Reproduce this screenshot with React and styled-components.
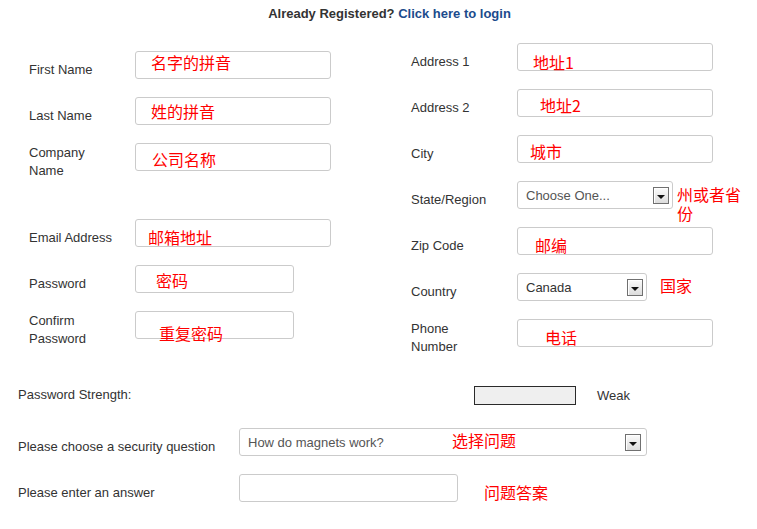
import React from 'react';
import styled, { createGlobalStyle } from 'styled-components';

const Global = createGlobalStyle`
  html, body { margin: 0; padding: 0; background: #fff; }
  body {
    font-family: "Liberation Sans", Arial, sans-serif;
    font-size: 13px;
    color: #333;
  }
  * { box-sizing: border-box; }
`;

const Page = styled.div`
  width: 757px;
  height: 529px;
  overflow: hidden;
`;

const Header = styled.div`
  padding: 6px 0 0 22px;
  text-align: center;
  font-weight: bold;
  font-size: 13px;
  line-height: 15px;
  color: #333;
`;

const LoginLink = styled.a`
  color: #1b4b8c;
  text-decoration: none;
`;

const Columns = styled.div`
  display: grid;
  grid-template-columns: 382px 1fr;
  padding-left: 29px;
  margin-top: 13px;
`;

const Column = styled.div`
  padding-top: ${(p) => p.$offset || 0}px;
`;

const Row = styled.div`
  display: flex;
  align-items: center;
  height: 46px;
  margin-bottom: ${(p) => p.$after || 0}px;
`;

const Label = styled.div`
  flex: none;
  width: ${(p) => p.$w || 86}px;
  margin-right: ${(p) => p.$mr ?? 20}px;
  padding-top: ${(p) => p.$pt ?? 10}px;
  line-height: 18px;
  color: #333;
`;

const Field = styled.div`
  position: relative;
  flex: none;
`;

const TextInput = styled.input`
  display: block;
  width: ${(p) => p.$w}px;
  height: 28px;
  border: 1px solid #cbcbcb;
  border-radius: 3px;
  background: #fff;
  padding: 0 8px;
  font: inherit;
  outline: none;
`;

const SelectBox = styled.div`
  display: flex;
  align-items: center;
  width: ${(p) => p.$w}px;
  height: 28px;
  border: 1px solid #cbcbcb;
  border-radius: 3px;
  background: #fff;
  padding: 1px ${(p) => p.$pr || 3}px 0 8px;
  color: ${(p) => p.$color || '#555'};
`;

const SelectText = styled.span`
  flex: 1;
  white-space: nowrap;
  line-height: 16px;
`;

const ArrowBox = styled.span`
  flex: none;
  width: 16px;
  height: 17px;
  border: 1px solid #707070;
  background: linear-gradient(#fbfbfb, #dcdcdc);
  box-shadow: inset 1px 1px 0 #fff;
  display: flex;
  align-items: center;
  justify-content: center;
  padding-top: 2px;
  &::after {
    content: '';
    border-left: 4px solid transparent;
    border-right: 4px solid transparent;
    border-top: 4px solid #111;
  }
`;

const Note = styled.span`
  position: absolute;
  left: ${(p) => p.$x}px;
  top: ${(p) => p.$y}px;
  color: #ff0000;
  font-family: "Noto Sans CJK SC", sans-serif;
  font-size: 16px;
  line-height: 18px;
  white-space: nowrap;
  pointer-events: none;
`;

const SideNote = styled.span`
  flex: none;
  align-self: flex-start;
  width: ${(p) => (p.$w ? `${p.$w}px` : 'auto')};
  margin-left: ${(p) => p.$ml}px;
  margin-top: ${(p) => p.$mt}px;
  color: #ff0000;
  font-family: "Noto Sans CJK SC", sans-serif;
  font-size: 16px;
  line-height: 19px;
`;

const Bottom = styled.div`
  padding-left: 18px;
  margin-top: 16px;
`;

const StrengthBar = styled.div`
  flex: none;
  width: 102px;
  height: 19px;
  border: 1px solid #2a2a2a;
  background: #efefef;
`;

const StrengthText = styled.span`
  margin-left: 21px;
  color: #333;
`;

function Input({ w, note, nx, ny }) {
  return (
    <Field>
      <TextInput $w={w} type="text" readOnly />
      {note && (
        <Note $x={nx} $y={ny}>
          {note}
        </Note>
      )}
    </Field>
  );
}

function Select({ w, text, color, pr, note, nx, ny }) {
  return (
    <Field>
      <SelectBox $w={w} $color={color} $pr={pr} role="combobox">
        <SelectText>{text}</SelectText>
        <ArrowBox />
      </SelectBox>
      {note && (
        <Note $x={nx} $y={ny}>
          {note}
        </Note>
      )}
    </Field>
  );
}

export default function App() {
  return (
    <Page>
      <Global />
      <Header>
        Already Registered? <LoginLink href="#">Click here to login</LoginLink>
      </Header>

      <Columns>
        <Column $offset={8}>
          <Row>
            <Label>First Name</Label>
            <Input w={196} note="名字的拼音" nx={16} ny={2} />
          </Row>
          <Row>
            <Label>Last Name</Label>
            <Input w={196} note="姓的拼音" nx={16} ny={5} />
          </Row>
          <Row $after={30}>
            <Label>Company Name</Label>
            <Input w={196} note="公司名称" nx={17} ny={7} />
          </Row>
          <Row>
            <Label>Email Address</Label>
            <Input w={196} note="邮箱地址" nx={13} ny={9} />
          </Row>
          <Row>
            <Label>Password</Label>
            <Input w={159} note="密码" nx={21} ny={6} />
          </Row>
          <Row>
            <Label>Confirm Password</Label>
            <Input w={159} note="重复密码" nx={24} ny={13} />
          </Row>
        </Column>

        <Column>
          <Row>
            <Label>Address 1</Label>
            <Input w={196} note="地址1" nx={16} ny={10} />
          </Row>
          <Row>
            <Label>Address 2</Label>
            <Input w={196} note="地址2" nx={23} ny={7} />
          </Row>
          <Row>
            <Label>City</Label>
            <Input w={196} note="城市" nx={13} ny={7} />
          </Row>
          <Row>
            <Label>State/Region</Label>
            <Select w={156} text="Choose One..." />
            <SideNote $w={70} $ml={4} $mt={13}>州或者省份</SideNote>
          </Row>
          <Row>
            <Label>Zip Code</Label>
            <Input w={196} note="邮编" nx={18} ny={9} />
          </Row>
          <Row>
            <Label>Country</Label>
            <Select w={130} text="Canada" color="#333" />
            <SideNote $ml={13} $mt={12}>国家</SideNote>
          </Row>
          <Row>
            <Label>Phone Number</Label>
            <Input w={196} note="电话" nx={28} ny={9} />
          </Row>
        </Column>
      </Columns>

      <Bottom>
        <Row $after={1}>
          <Label $w={456} $mr={0} $pt={0}>Password Strength:</Label>
          <StrengthBar />
          <StrengthText>Weak</StrengthText>
        </Row>
        <Row>
          <Label $w={221} $mr={0}>Please choose a security question</Label>
          <Select
            w={408}
            text="How do magnets work?"
            pr={5}
            note="选择问题"
            nx={213}
            ny={3}
          />
        </Row>
        <Row>
          <Label $w={221} $mr={0}>Please enter an answer</Label>
          <Input w={219} />
          <SideNote $ml={26} $mt={18}>问题答案</SideNote>
        </Row>
      </Bottom>
    </Page>
  );
}
